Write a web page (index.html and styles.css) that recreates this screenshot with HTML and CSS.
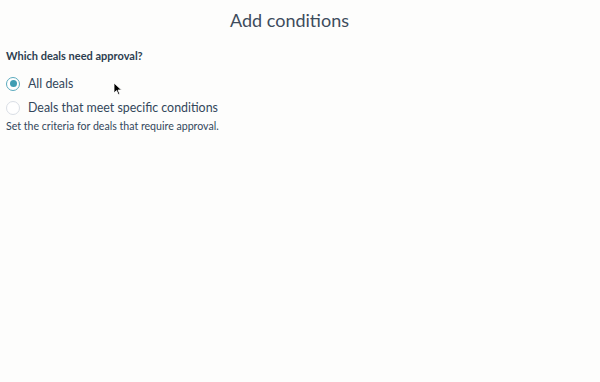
FILE: index.html
```html
<!DOCTYPE html>
<html>
<head>
<meta charset="utf-8">
<link rel="stylesheet" href="styles.css">
</head>
<body>
<div class="page">
  <h1 class="title">Add conditions</h1>
  <div class="question">Which deals need approval?</div>
  <div class="options">
    <label class="option">
      <span class="radio checked"><span class="dot"></span></span>
      <span class="label">All deals</span>
    </label>
    <label class="option">
      <span class="radio"></span>
      <span class="label">Deals that meet specific conditions</span>
    </label>
  </div>
  <div class="help">Set the criteria for deals that require approval.</div>
  <svg class="cursor" width="10" height="14" viewBox="0 0 10 14"><path d="M1 1 L1 11 L3.5 8.6 L5.4 12.6 L6.8 12 L5 8 L8.5 8 Z" fill="#000" stroke="#fff" stroke-width="0.8"/></svg>
</div>
</body>
</html>
```
FILE: styles.css
```css
html, body { margin: 0; padding: 0; }
body {
  width: 600px;
  height: 382px;
  background: #fdfdfc;
  font-family: "Lato", "Noto Sans", sans-serif;
  color: #33475b;
  overflow: hidden;
}
.page {
  position: relative;
  padding: 8px 6px 0 6px;
}
.title {
  margin: 0;
  padding-right: 21px;
  text-align: center;
  font-weight: 400;
  font-size: 18px;
  line-height: 24px;
  color: #3e4c5c;
}
.question {
  margin-top: 16px;
  font-size: 11px;
  font-weight: 700;
  line-height: 16px;
  color: #2d3e50;
}
.options {
  margin-top: 11px;
  display: flex;
  flex-direction: column;
  gap: 7px;
}
.option {
  display: flex;
  align-items: center;
  gap: 8px;
}
.radio {
  box-sizing: border-box;
  width: 14px;
  height: 14px;
  border-radius: 50%;
  border: 1px solid #d9dee5;
  background: #fff;
  display: flex;
  align-items: center;
  justify-content: center;
}
.radio.checked { border: 1.5px solid #5aaabd; }
.dot { width: 7px; height: 7px; border-radius: 50%; background: #3f9db3; }
.label { font-size: 12.4px; line-height: 17px; }
.help {
  margin-top: 3px;
  font-size: 10.6px;
  line-height: 15px;
}
.cursor { position: absolute; left: 113px; top: 82px; }
```
